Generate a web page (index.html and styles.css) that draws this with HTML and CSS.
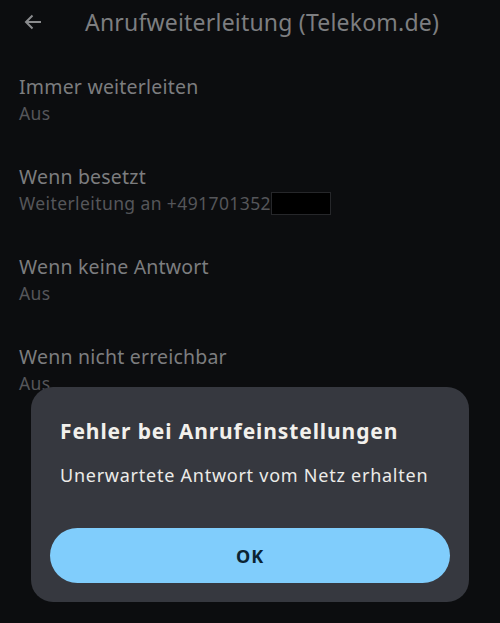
FILE: index.html
```html
<!DOCTYPE html>
<html>
<head>
  <meta charset="utf-8">
  <title>Anrufweiterleitung</title>
  <link rel="stylesheet" href="styles.css">
</head>
<body>
  <div class="appbar">
    <svg class="back" width="20" height="20" viewBox="0 0 20 20">
      <path d="M18 10H3M9.5 3.5L3 10l6.5 6.5" fill="none" stroke="#8a8b8d" stroke-width="2"/>
    </svg>
    <div class="appbar-title">Anrufweiterleitung (Telekom.de)</div>
  </div>

  <div class="list">
    <div class="item">
      <div class="item-label">Immer weiterleiten</div>
      <div class="item-sub">Aus</div>
    </div>
    <div class="item">
      <div class="item-label">Wenn besetzt</div>
      <div class="item-sub">Weiterleitung an +491701352<span class="redact"></span></div>
    </div>
    <div class="item">
      <div class="item-label">Wenn keine Antwort</div>
      <div class="item-sub">Aus</div>
    </div>
    <div class="item">
      <div class="item-label">Wenn nicht erreichbar</div>
      <div class="item-sub">Aus</div>
    </div>
  </div>

  <div class="overlay">
    <div class="dialog">
      <div class="dialog-title">Fehler bei Anrufeinstellungen</div>
      <div class="dialog-text">Unerwartete Antwort vom Netz erhalten</div>
      <div class="dialog-btn">OK</div>
    </div>
  </div>
</body>
</html>
```

FILE: styles.css
```css
body {
  margin: 0;
  background: #0c0d0f;
  font-family: "Noto Sans", sans-serif;
  height: 623px;
  overflow: hidden;
}

.appbar {
  height: 44px;
  display: flex;
  align-items: center;
}
.back {
  margin-left: 23px;
  margin-right: 42px;
}
.appbar-title {
  color: #7d7e80;
  font-size: 23px;
  line-height: 28px;
  letter-spacing: 0.2px;
}

.list {
  padding-top: 11px;
  padding-left: 19px;
}
.item {
  padding: 19px 0;
}
.item-label {
  color: #7c7d7f;
  font-size: 19.5px;
  line-height: 26px;
  letter-spacing: 0.2px;
}
.item-sub {
  color: #55565a;
  font-size: 17.5px;
  line-height: 26px;
  letter-spacing: 0.4px;
  display: flex;
  align-items: center;
}
.redact {
  display: inline-block;
  width: 58px;
  height: 21px;
  background: #000;
  border: 1px solid #26272a;
}

.overlay {
  position: fixed;
  left: 0;
  right: 0;
  bottom: 21px;
  padding: 0 31px;
}
.dialog {
  background: #36383f;
  border-radius: 22px;
  height: 215px;
  box-sizing: border-box;
  padding: 30px 19px 19px;
  display: flex;
  flex-direction: column;
}
.dialog-title {
  color: #f2f0ec;
  font-weight: bold;
  font-size: 21px;
  line-height: 28px;
  letter-spacing: 0.9px;
  padding-left: 10px;
}
.dialog-text {
  color: #ecebe8;
  font-size: 18px;
  line-height: 26px;
  letter-spacing: 0.75px;
  margin-top: 17px;
  padding-left: 10px;
}
.dialog-btn {
  margin-top: auto;
  height: 55px;
  border-radius: 28px;
  background: #80cdfc;
  color: #0b2433;
  font-weight: bold;
  font-size: 18px;
  letter-spacing: 1px;
  display: flex;
  align-items: center;
  justify-content: center;
}
```
